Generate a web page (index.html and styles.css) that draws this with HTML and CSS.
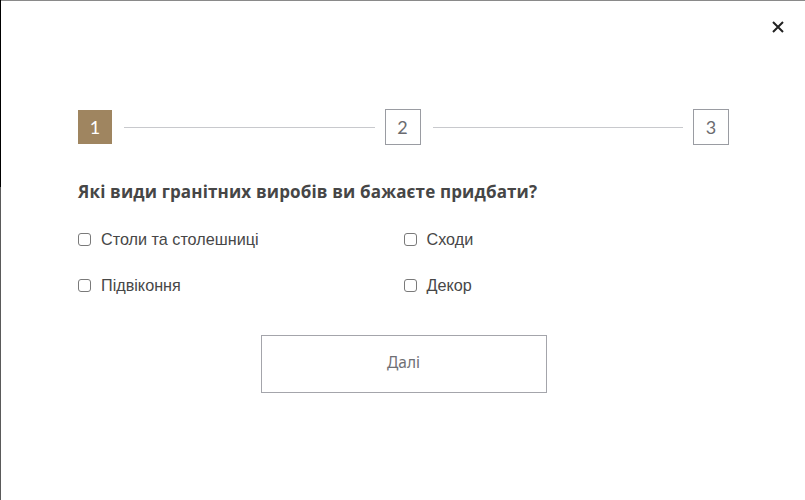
FILE: index.html
```html
<!DOCTYPE html>
<html lang="uk">
<head>
<meta charset="utf-8">
<link rel="stylesheet" href="styles.css">
</head>
<body>
<div class="modal">
  <button class="close" aria-label="Закрити">
    <svg width="12" height="12" viewBox="0 0 12 12"><path d="M1 1L11 11M11 1L1 11" stroke="#222" stroke-width="2" stroke-linecap="butt"/></svg>
  </button>
  <div class="steps">
    <div class="step active">1</div>
    <div class="line"></div>
    <div class="step">2</div>
    <div class="line"></div>
    <div class="step">3</div>
  </div>
  <h2 class="title">Які види гранітних виробів ви бажаєте придбати?</h2>
  <div class="options">
    <label class="opt"><span class="box"></span>Столи та столешниці</label>
    <label class="opt"><span class="box"></span>Сходи</label>
    <label class="opt"><span class="box"></span>Підвіконня</label>
    <label class="opt"><span class="box"></span>Декор</label>
  </div>
  <div class="actions">
    <button class="next">Далі</button>
  </div>
</div>
</body>
</html>
```
FILE: styles.css
```css
html, body {
  margin: 0;
  padding: 0;
  background: #fff;
}
.modal {
  position: relative;
  box-sizing: border-box;
  width: 805px;
  height: 500px;
  border-left: 1px solid #000;
  border-image: linear-gradient(#000 0, #000 187px, #5a5a5a 187px) 1;
  box-shadow: inset 0 1px 0 #8a8a8a;
  padding: 109px 76px 0 77px;
  font-family: "Liberation Sans", Arial, sans-serif;
  color: #444;
}
.close {
  position: absolute;
  top: 21px;
  right: 21px;
  width: 12px;
  height: 12px;
  padding: 0;
  border: 0;
  background: none;
  display: flex;
}
.steps {
  display: flex;
  align-items: center;
  height: 36px;
}
.step {
  box-sizing: border-box;
  width: 36px;
  height: 36px;
  border: 1px solid #9a9ca2;
  display: flex;
  align-items: center;
  justify-content: center;
  font-family: "Lato", sans-serif;
  font-size: 18px;
  color: #6b6b70;
}
.step.active {
  width: 34px;
  height: 34px;
  border: 0;
  background: #9f8560;
  color: #fff;
}
.line {
  flex: 1;
  height: 1px;
  background: #c8c9cd;
  margin: 0 10px 0 12px;
}
.title {
  margin: 35px 0 0;
  font-family: "Open Sans", sans-serif;
  font-weight: 700;
  font-size: 17px;
  line-height: 24px;
  color: #464646;
  letter-spacing: 0.15px;
}
.options {
  display: grid;
  grid-template-columns: 1fr 1fr;
  row-gap: 24px;
  margin-top: 24px;
}
.opt {
  display: flex;
  align-items: center;
  height: 22px;
  font-size: 16.2px;
  color: #474747;
}
.box {
  box-sizing: border-box;
  width: 13px;
  height: 13px;
  border: 1px solid #7a7a7a;
  border-radius: 3px;
  margin-right: 10px;
}
.actions {
  display: flex;
  justify-content: center;
  margin-top: 39px;
}
.next {
  box-sizing: border-box;
  width: 286px;
  height: 58px;
  padding: 0 0 5px;
  border: 1px solid #a4a5ab;
  background: #fff;
  font-family: "Noto Sans", sans-serif;
  font-size: 15.5px;
  color: #6f6f74;
}
```
